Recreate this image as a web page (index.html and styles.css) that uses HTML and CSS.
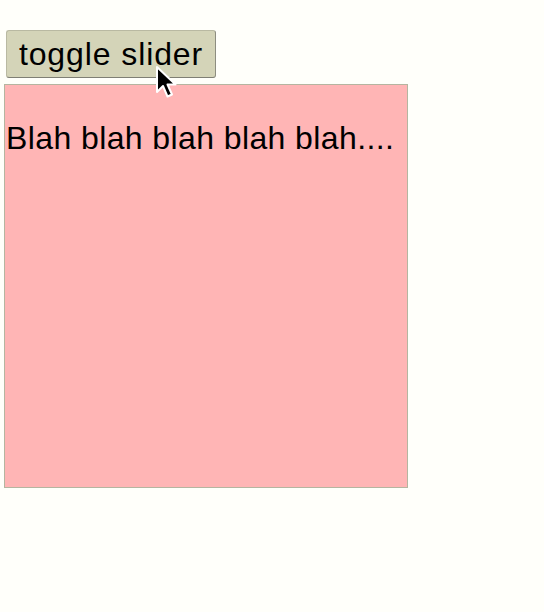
FILE: index.html
```html
<!DOCTYPE html>
<html>
<head>
<meta charset="utf-8">
<link rel="stylesheet" href="styles.css">
</head>
<body>
<div class="page">
  <button class="toggle">toggle slider</button>
  <div class="slider">
    <p class="msg">Blah blah blah blah blah....</p>
  </div>
</div>
<svg class="cursor" width="26" height="36" viewBox="0 0 26 36" xmlns="http://www.w3.org/2000/svg">
  <path d="M2 2 L2 27 L8 21 L12.5 31.5 L17 29.5 L12.5 19.5 L20.5 19.5 Z" fill="#000" stroke="#fff" stroke-width="2" stroke-linejoin="round"/>
</svg>
</body>
</html>
```
FILE: styles.css
```css
html, body {
  margin: 0;
  padding: 0;
  background: #fffffa;
}
.page {
  padding-top: 30px;
  display: flex;
  flex-direction: column;
  align-items: flex-start;
}
.toggle {
  margin-left: 6px;
  width: 210px;
  height: 48px;
  box-sizing: border-box;
  background: #d4d4b8;
  border: 1px solid #b9b9a2;
  border-right-color: #8d8d80;
  border-bottom-color: #7f7f74;
  border-radius: 3px;
  font-family: "Liberation Sans", Arial, sans-serif;
  font-size: 32px;
  letter-spacing: 0.9px;
  color: #000;
  padding: 0;
  text-align: center;
}
.slider {
  margin-top: 6px;
  margin-left: 4px;
  width: 404px;
  height: 404px;
  box-sizing: border-box;
  background: #ffb5b5;
  border: 1px solid #b5b5a0;
}
.msg {
  margin: 35px 0 0 1px;
  font-family: "Liberation Sans", Arial, sans-serif;
  font-size: 32px;
  letter-spacing: 0.4px;
  color: #000;
  white-space: nowrap;
}
.cursor {
  position: absolute;
  left: 155px;
  top: 65px;
}
```
